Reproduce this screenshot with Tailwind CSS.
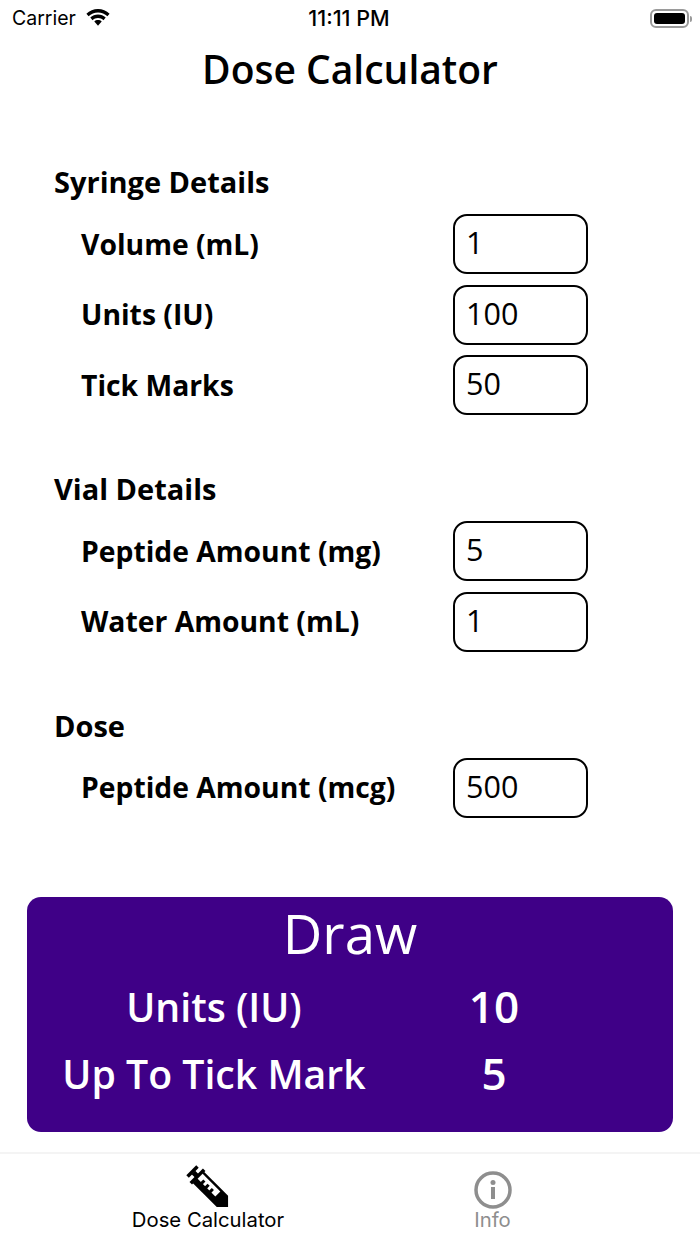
<!DOCTYPE html>
<html lang="en">
<head>
  <meta charset="UTF-8" />
  <title>Dose Calculator</title>
  <script src="https://cdn.jsdelivr.net/npm/@tailwindcss/browser@4"></script>
</head>
<body class="bg-white text-black font-['Open_Sans',sans-serif]">
  <div class="w-[700px] h-[1244px] flex flex-col overflow-hidden">
    <!-- status bar -->
    <div class="h-10 shrink-0 flex items-center justify-between pl-3 pr-2 font-['Inter',sans-serif]">
      <div class="flex items-center gap-[9px] w-40 text-[19.5px] leading-none -mt-[3px]">
        <span>Carrier</span>
        <svg class="w-[26px] h-[19px]" viewBox="0 0 26 19" fill="black">
          <path d="M13 3.5c3.6 0 6.9 1.4 9.4 3.8l2.2-2.6C21.5 1.8 17.4 0 13 0S4.5 1.8 1.400 4.700l2.200 2.600C6.100 4.900 9.400 3.500 13 3.500z" />
          <path d="M13 9c2.100 0 4 .8 5.500 2.200l2.200-2.600C18.600 6.700 15.900 5.500 13 5.500S7.400 6.700 5.300 8.600l2.200 2.600C9 9.800 10.900 9 13 9z" />
          <path d="M13 11c-1.400 0-2.700.5-3.700 1.400L13 16.800l3.700-4.400C15.700 11.500 14.400 11 13 11z" />
        </svg>
      </div>
      <span class="text-[21.5px] font-medium leading-none -mt-[3px] -ml-[6px]">11:11 PM</span>
      <div class="w-40 flex justify-end items-center -mt-[3px]">
        <div class="w-[39px] h-[19px] rounded-[6px] border-2 border-[#9a9a9a] p-[2px]">
          <div class="w-full h-full rounded-[3px] bg-black"></div>
        </div>
        <div class="w-[2px] h-[6px] ml-px rounded-r bg-[#9a9a9a]"></div>
      </div>
    </div>

    <h1 class="h-[60px] shrink-0 flex items-center justify-center text-[39px] font-semibold -mt-[1px]">Dose Calculator</h1>

    <main class="mt-[69px] flex flex-col text-[28.3px] font-bold">
      <section class="pl-[54px]">
        <h2 class="h-[30px] flex items-center text-[29px] -mt-[1px]">Syringe Details</h2>
        <div class="mt-[17px] flex flex-col gap-[10.5px] pl-[27px]">
          <div class="flex items-center h-[60px]"><label class="w-[372px]">Volume (mL)</label><input value="1" class="w-[135px] h-[60px] rounded-[14px] border-2 border-black pl-[11px] pb-1 text-[30.5px] font-normal" /></div>
          <div class="flex items-center h-[60px]"><label class="w-[372px]">Units (IU)</label><input value="100" class="w-[135px] h-[60px] rounded-[14px] border-2 border-black pl-[11px] pb-1 text-[30.5px] font-normal" /></div>
          <div class="flex items-center h-[60px]"><label class="w-[372px]">Tick Marks</label><input value="50" class="w-[135px] h-[60px] rounded-[14px] border-2 border-black pl-[11px] pb-1 text-[30.5px] font-normal" /></div>
        </div>
      </section>

      <section class="pl-[54px] mt-[60px]">
        <h2 class="h-[30px] flex items-center text-[29px] -mt-[1px]">Vial Details</h2>
        <div class="mt-[17px] flex flex-col gap-[10.5px] pl-[27px]">
          <div class="flex items-center h-[60px]"><label class="w-[372px]">Peptide Amount (mg)</label><input value="5" class="w-[135px] h-[60px] rounded-[14px] border-2 border-black pl-[11px] pb-1 text-[30.5px] font-normal" /></div>
          <div class="flex items-center h-[60px]"><label class="w-[372px]">Water Amount (mL)</label><input value="1" class="w-[135px] h-[60px] rounded-[14px] border-2 border-black pl-[11px] pb-1 text-[30.5px] font-normal" /></div>
        </div>
      </section>

      <section class="pl-[54px] mt-[60px]">
        <h2 class="h-[30px] flex items-center text-[29px] -mt-[1px]">Dose</h2>
        <div class="mt-[17px] flex flex-col pl-[27px]">
          <div class="flex items-center h-[60px]"><label class="w-[372px]">Peptide Amount (mcg)</label><input value="500" class="w-[135px] h-[60px] rounded-[14px] border-2 border-black pl-[11px] pb-1 text-[30.5px] font-normal" /></div>
        </div>
      </section>
    </main>

    <!-- result card -->
    <div class="mt-[79px] mx-[27px] h-[235px] shrink-0 rounded-[14px] bg-[#3f0087] text-white flex flex-col">
      <div class="h-[76px] flex items-center justify-center text-[54.5px] leading-none -mt-[1px]">Draw</div>
      <div class="grid grid-cols-[374px_186px] text-[39.2px] font-semibold leading-none mt-[2px]">
        <div class="h-[67px] flex items-center justify-center">Units (IU)</div>
        <div class="h-[67px] flex items-center justify-center text-[44px] pb-[2px]">10</div>
        <div class="h-[67px] flex items-center justify-center">Up To Tick Mark</div>
        <div class="h-[67px] flex items-center justify-center text-[44px] pb-[2px]">5</div>
      </div>
    </div>

    <!-- tab bar -->
    <nav class="mt-5 flex-1 border-t-2 border-[#f4f4f4] flex font-['Inter',sans-serif] text-[20.3px] leading-none">
      <div class="w-[416px] flex flex-col items-center pt-[14px]">
        <svg class="w-[42px] h-[40px] overflow-visible" viewBox="0 0 42 40">
          <g transform="translate(5 3) rotate(45)" fill="black">
            <rect x="-1" y="-7" width="3.500" height="14" />
            <rect x="2" y="-2.500" width="5" height="5" />
            <rect x="6" y="-9.500" width="3.500" height="19" />
            <path d="M9 -8H43L51 0L43 8H9Z" />
            <rect x="9.500" y="-5.500" width="25" height="7" fill="white" />
            <rect x="14" y="-2" width="3" height="4" />
            <rect x="20" y="-2" width="3" height="4" />
            <rect x="26" y="-2" width="3" height="4" />
          </g>
        </svg>
        <span class="mt-[2px]">Dose Calculator</span>
      </div>
      <div class="w-[153px] flex flex-col items-center pt-[17px] text-[#8e8e8e]">
        <svg class="w-[38px] h-[38px]" viewBox="0 0 38 38" fill="none">
          <circle cx="19" cy="19" r="17" stroke="#8e8e8e" stroke-width="3.500" />
          <circle cx="19" cy="11.500" r="2.500" fill="#8e8e8e" />
          <rect x="17" y="16" width="4" height="12" fill="#8e8e8e" />
        </svg>
        <span class="mt-[1px]">Info</span>
      </div>
    </nav>
  </div>
</body>
</html>
